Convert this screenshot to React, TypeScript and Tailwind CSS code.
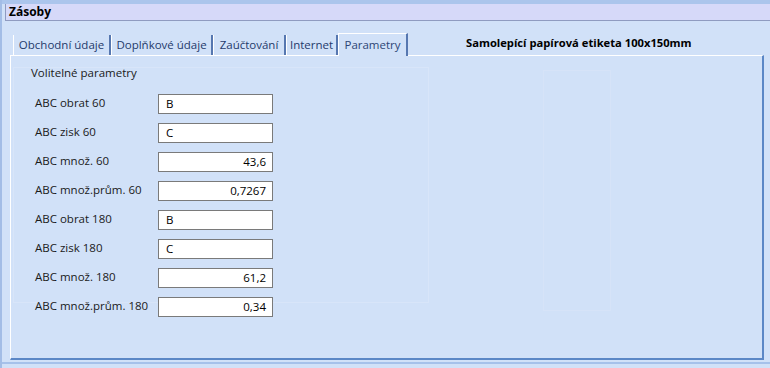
import React from 'react';

const TABS = [
  { label: 'Obchodní údaje', w: 'w-[98px]' },
  { label: 'Doplňkové údaje', w: 'w-[102px]' },
  { label: 'Zaúčtování', w: 'w-[73px]' },
  { label: 'Internet', w: 'w-[52px]' },
];

const ROWS = [
  { label: 'ABC obrat 60', value: 'B', num: false },
  { label: 'ABC zisk 60', value: 'C', num: false },
  { label: 'ABC množ. 60', value: '43,6', num: true },
  { label: 'ABC množ.prům. 60', value: '0,7267', num: true },
  { label: 'ABC obrat 180', value: 'B', num: false },
  { label: 'ABC zisk 180', value: 'C', num: false },
  { label: 'ABC množ. 180', value: '61,2', num: true },
  { label: 'ABC množ.prům. 180', value: '0,34', num: true },
];

export default function App() {
  return (
    <div className="w-[770px] h-[368px] overflow-hidden bg-[#d1e1f8] border-l-2 border-[#a3bde6] flex flex-col font-['Open_Sans','Noto_Sans',sans-serif] text-[11.5px] text-[#1a1a1a]">
      {/* Top strip */}
      <div className="h-[4px] bg-[#abc5ec] -ml-[2px]" />

      {/* Header */}
      <div className="ml-[3px] h-[17px] bg-[#d6d9f9] border-l border-b border-[#8f9bc0] flex items-center pl-[3px]">
        <span className="font-bold text-[12px] text-black">Zásoby</span>
      </div>

      {/* Tabs */}
      <div className="ml-[11px] mt-[12px] h-[23px] -mb-px flex items-end relative z-10">
        {TABS.map((t) => (
          <div
            key={t.label}
            className={`${t.w} h-[20px] mb-px border-l border-white border-r-2 border-r-[#5677b0] flex items-center justify-center text-[#1f3a6b] leading-none`}
          >
            {t.label}
          </div>
        ))}
        <div className="w-[70px] h-[23px] bg-[#d1e1f8] border-l border-t border-white border-r-2 border-r-[#5677b0] flex items-center justify-center text-[#2d4676] leading-none pb-[1px]">
          Parametry
        </div>
        <div className="self-center ml-[58px] mt-[-2px] font-bold text-[11.2px] text-black">
          Samolepící papírová etiketa 100x150mm
        </div>
      </div>

      {/* Panel */}
      <div className="ml-[8px] w-[754px] h-[305px] border-l border-t border-white border-r-2 border-b-2 border-r-[#5b87c6] border-b-[#5b87c6] flex items-start">
        {/* Group box */}
        <div className="ml-[2px] mt-[11px] w-[416px] h-[236px] border border-[#d8e5f9] relative">
          <div className="absolute left-[17px] top-[-2px] leading-[14px] text-[#1a1a1a]">
            Volitelné parametry
          </div>
          <div className="mt-[26px] pl-[21px] flex flex-col gap-[9px]">
            {ROWS.map((r) => (
              <div key={r.label} className="flex items-start h-[20px]">
                <div className="w-[123px] leading-[16px] pt-[1px]">{r.label}</div>
                <div
                  className={`w-[115px] h-[20px] bg-white border border-[#7a7a7a] flex items-center leading-none text-black ${
                    r.num ? 'justify-end pr-[6px]' : 'pl-[7px]'
                  }`}
                >
                  {r.value}
                </div>
              </div>
            ))}
          </div>
        </div>
        {/* faint second box */}
        <div className="ml-[114px] mt-[14px] w-[68px] h-[241px] border border-[#d6e3f8]" />
      </div>

      {/* bottom lines */}
      <div className="mt-[2px] h-[2px] bg-[#a6c1ea] -ml-[2px]" />
    </div>
  );
}
